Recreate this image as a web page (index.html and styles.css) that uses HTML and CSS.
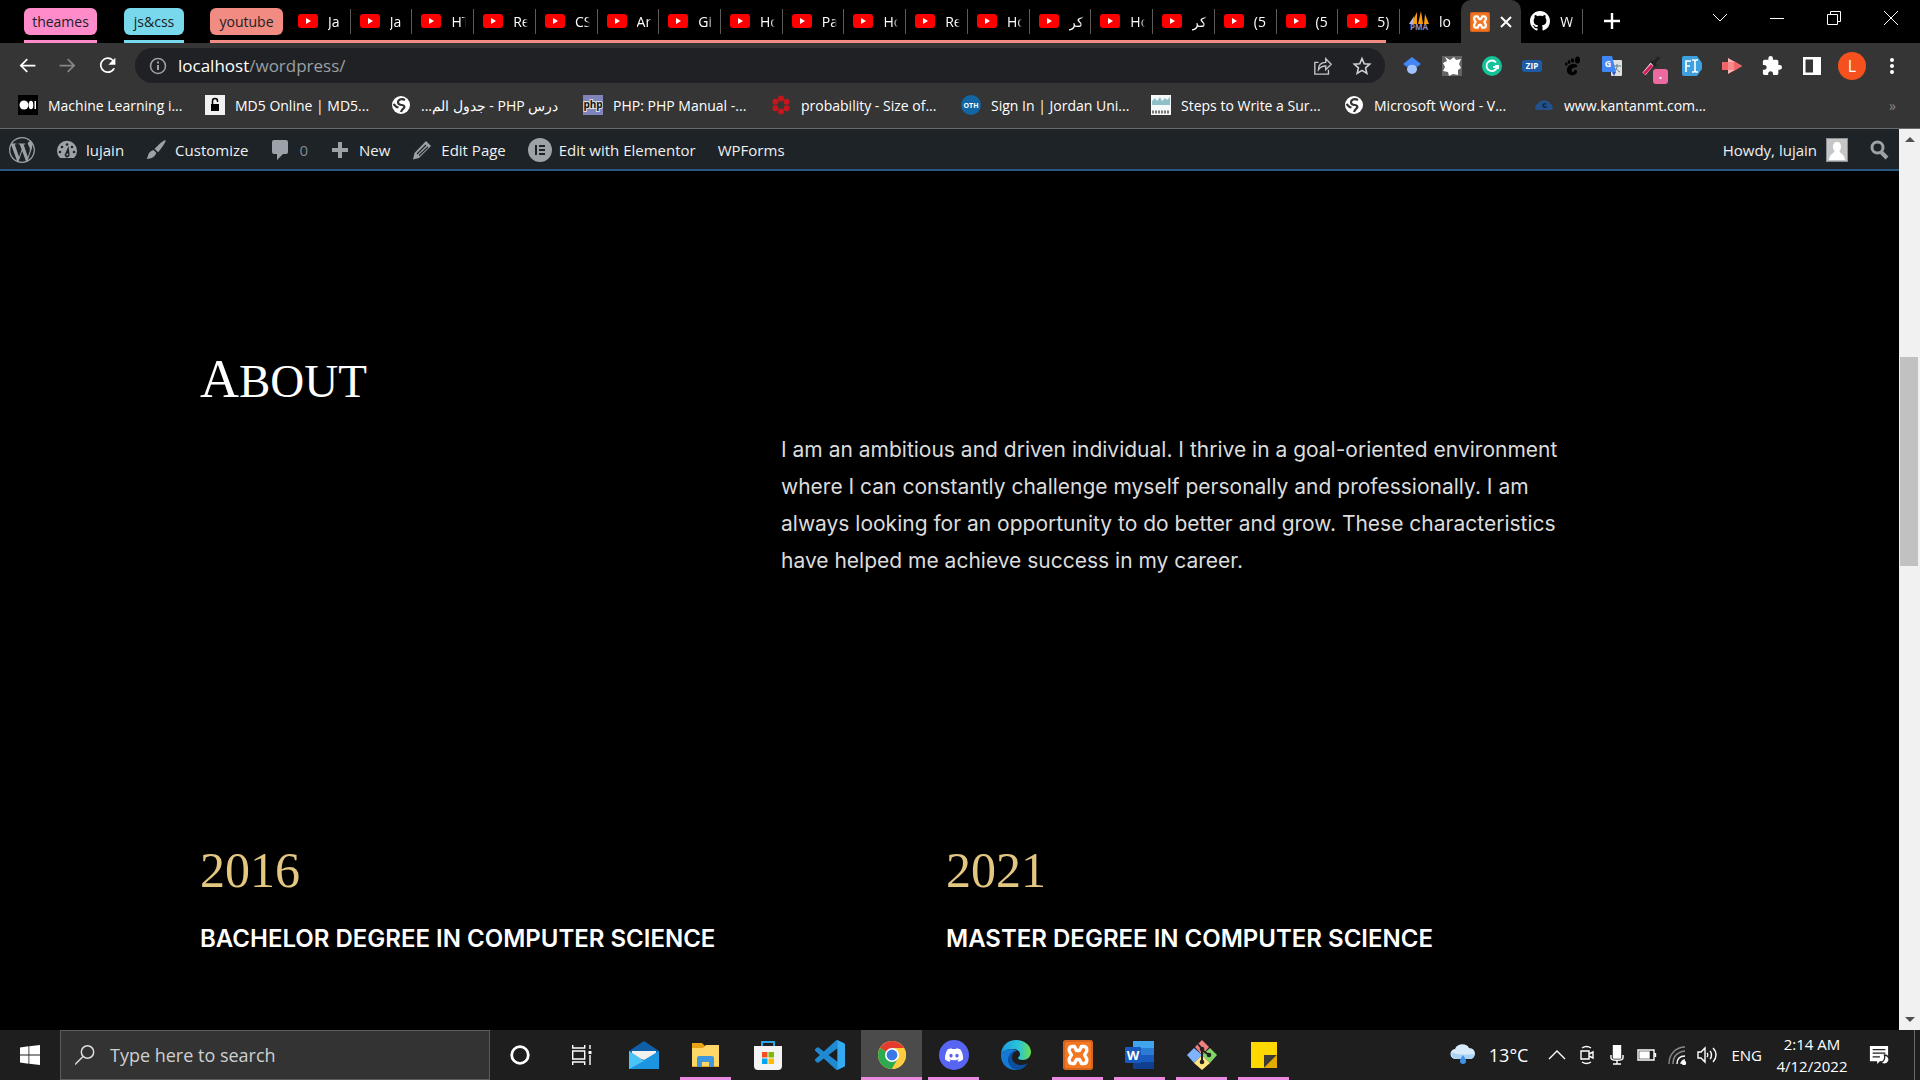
FILE: index.html
```html
<!DOCTYPE html>
<html lang="en">
<head>
<meta charset="utf-8">
<title>About</title>
<link rel="stylesheet" href="styles.css">
</head>
<body>
<svg class="sprite" aria-hidden="true">
  <symbol id="yt" viewBox="0 0 20 20"><rect y="3" width="20" height="14" rx="3" fill="#f00"/><path d="M8 7l5 3-5 3z" fill="#fff"/></symbol>
  <symbol id="xampp" viewBox="0 0 30 30"><rect width="30" height="30" rx="3" fill="#f37623"/><rect x="1" y="1" width="28" height="28" rx="2" fill="none" stroke="#b9541a"/><path d="M9 6.500h2.500l2 4h3l2-4H21c3 0 3.500 4 2 6L21.500 15l1.500 2.500c1.500 2 1 6-2 6h-2.500l-2-4h-3l-2 4H9c-3 0-3.500-4-2-6L8.500 15 7 12.500c-1.500-2-1-6 2-6z" fill="none" stroke="#fff" stroke-width="3.400" stroke-linejoin="round"/></symbol>
  <symbol id="globe" viewBox="0 0 20 20"><circle cx="10" cy="10" r="9" fill="#fff"/><path d="M14 5c-4-2-7 0-7 2s2 3 4 3 3 2 2 3-2 1-3 4M2.500 9l3 3 2 .5" fill="none" stroke="#303134" stroke-width="2.200"/></symbol>
</svg>

<header class="browser">
  <div class="tabstrip">
    <div class="group pink"><div class="group-row"><button class="chip">theames</button></div></div>
    <div class="group cyan"><div class="group-row"><button class="chip">js&amp;css</button></div></div>
    <div class="group coral grow">
      <div class="group-row">
        <button class="chip">youtube</button>
        <div class="tabs">
          <button class="tab"><svg><use href="#yt"/></svg><span>Ja</span></button>
          <button class="tab"><svg><use href="#yt"/></svg><span>Ja</span></button>
          <button class="tab"><svg><use href="#yt"/></svg><span>HT</span></button>
          <button class="tab"><svg><use href="#yt"/></svg><span>Re</span></button>
          <button class="tab"><svg><use href="#yt"/></svg><span>CS</span></button>
          <button class="tab"><svg><use href="#yt"/></svg><span>Ar</span></button>
          <button class="tab"><svg><use href="#yt"/></svg><span>Gi</span></button>
          <button class="tab"><svg><use href="#yt"/></svg><span>Ho</span></button>
          <button class="tab"><svg><use href="#yt"/></svg><span>Pa</span></button>
          <button class="tab"><svg><use href="#yt"/></svg><span>Ho</span></button>
          <button class="tab"><svg><use href="#yt"/></svg><span>Re</span></button>
          <button class="tab"><svg><use href="#yt"/></svg><span>Ho</span></button>
          <button class="tab"><svg><use href="#yt"/></svg><span>كر</span></button>
          <button class="tab"><svg><use href="#yt"/></svg><span>Ho</span></button>
          <button class="tab"><svg><use href="#yt"/></svg><span>كر</span></button>
          <button class="tab"><svg><use href="#yt"/></svg><span>(5</span></button>
          <button class="tab"><svg><use href="#yt"/></svg><span>(5</span></button>
          <button class="tab"><svg><use href="#yt"/></svg><span>5)</span></button>
        </div>
      </div>
    </div>
    <div class="loose-tabs">
      <button class="tab plain"><svg viewBox="0 0 20 20"><path d="M2 13L8 1v12zM9 13L12 0l2 13zM15 13l1-10 4 10z" fill="#f89c0e"/><path d="M0 13L5 5l-1 8z" fill="#b8b8d0"/><text x="10" y="19" font-size="8" font-weight="700" text-anchor="middle" fill="#8a8fc4">PMA</text></svg><span>lo</span></button>
      <div class="tab active"><svg><use href="#xampp"/></svg><button class="tab-close" aria-label="Close tab"><svg viewBox="0 0 12 12"><path d="M1 1l10 10M11 1L1 11" stroke="#fff" stroke-width="2"/></svg></button></div>
      <button class="tab"><svg viewBox="0 0 16 16"><path fill="#fff" d="M8 0C3.58 0 0 3.58 0 8c0 3.54 2.29 6.53 5.47 7.59.4.07.55-.17.55-.38 0-.19-.01-.82-.01-1.49-2.01.37-2.53-.49-2.69-.94-.09-.23-.48-.94-.82-1.13-.28-.15-.68-.52-.01-.53.63-.01 1.08.58 1.23.82.72 1.21 1.87.87 2.33.66.07-.52.28-.87.51-1.07-1.78-.2-3.64-.89-3.64-3.95 0-.87.31-1.59.82-2.15-.08-.2-.36-1.02.08-2.12 0 0 .67-.21 2.2.82.64-.18 1.32-.27 2-.27s1.36.09 2 .27c1.53-1.04 2.2-.82 2.2-.82.44 1.1.16 1.92.08 2.12.51.56.82 1.27.82 2.15 0 3.07-1.87 3.75-3.65 3.95.29.25.54.73.54 1.48 0 1.07-.01 1.93-.01 2.2 0 .21.15.46.55.38A8.01 8.01 0 0 0 16 8c0-4.42-3.58-8-8-8z"/></svg><span>W</span></button>
    </div>
    <button class="new-tab" aria-label="New tab"><svg viewBox="0 0 16 16"><path d="M8 0v16M0 8h16" stroke="#fff" stroke-width="2.400"/></svg></button>
    <div class="window-controls">
      <button aria-label="Search tabs"><svg viewBox="0 0 16 16"><path d="M1 4l7 7 7-7"/></svg></button>
      <button aria-label="Minimize"><svg viewBox="0 0 16 16"><path d="M1 8.500h14"/></svg></button>
      <button aria-label="Restore"><svg viewBox="0 0 16 16"><path d="M1.500 4.500h10v10h-10zM4.500 4.500v-3h10v10h-3"/></svg></button>
      <button aria-label="Close"><svg viewBox="0 0 16 16"><path d="M1 1l14 14M15 1L1 15"/></svg></button>
    </div>
  </div>

  <div class="toolbar">
    <button aria-label="Back"><svg viewBox="0 0 24 24"><path fill="#fff" d="M21 11H6.800l5.600-5.600L11 4l-8 8 8 8 1.400-1.400L6.800 13H21z"/></svg></button>
    <button aria-label="Forward"><svg viewBox="0 0 24 24"><path fill="#868686" d="M3 11h14.200l-5.600-5.600L13 4l8 8-8 8-1.400-1.400 5.600-5.600H3z"/></svg></button>
    <button aria-label="Reload"><svg viewBox="0 0 24 24"><path fill="#fff" d="M18.700 5.300A9 9 0 1 0 20.700 15h-2.300A7 7 0 1 1 17.300 6.700L13 11h8V3z"/></svg></button>
    <div class="omnibox">
      <svg viewBox="0 0 20 20"><circle cx="10" cy="10" r="7.500" fill="none" stroke="#9aa0a6" stroke-width="1.600"/><path d="M10 9v5M10 5.500v2" stroke="#9aa0a6" stroke-width="2"/></svg>
      <a href="#" class="url">localhost<span>/wordpress/</span></a>
      <button aria-label="Share"><svg viewBox="0 0 22 22" fill="none" stroke="#c4c6ca" stroke-width="1.500"><path d="M6 7H2v13h15v-5M6 15c0-6 4-8 8-8V3l6 6-6 6v-4c-4 0-6 1-8 4z"/></svg></button>
      <button aria-label="Bookmark this page"><svg viewBox="0 0 24 24"><path d="M12 3l2.600 6.200 6.700.6-5 4.400 1.500 6.600-5.800-3.500-5.800 3.500 1.500-6.600-5-4.400 6.700-.6z" fill="none" stroke="#d0d2d6" stroke-width="1.900"/></svg></button>
    </div>
    <div class="extensions">
      <button aria-label="Scholar"><svg viewBox="0 0 20 20"><circle cx="10" cy="13" r="5" fill="#a0c3ff"/><path d="M10 1l9 7-4 3c-2-3-8-3-10 0L1 8z" fill="#4285f4"/></svg></button>
      <button aria-label="Aperture"><svg viewBox="0 0 20 20"><rect width="20" height="20" fill="#646464"/><path d="M3 1l5 3 4-3 2 3 5-1-2 5 2 4-3 2v5l-5-1-4 2-1-4-5-1 2-4-2-4 4-2z" fill="#fff"/></svg></button>
      <button aria-label="Grammarly"><svg viewBox="0 0 20 20"><circle cx="10" cy="10" r="10" fill="#15c39a"/><path d="M14 6.500A5.300 5.300 0 1 0 15 11h-4M13 10h3v3" fill="none" stroke="#fff" stroke-width="1.800"/></svg></button>
      <button aria-label="Zip"><svg viewBox="0 0 20 20"><rect y="4" width="20" height="12" rx="3" fill="#1f5ca8"/><text x="10" y="13" font-size="8" font-weight="700" text-anchor="middle" fill="#fff">ZIP</text></svg></button>
      <button aria-label="Gnome"><svg viewBox="0 0 20 20" fill="#000"><path d="M15 9c-3-2-9-1-10 4s4 7 7 6 4-4 2-5-1 2-3 2-2-3 0-4 5 0 4-3z"/><ellipse cx="15.500" cy="4" rx="2.500" ry="3.500"/><ellipse cx="10.500" cy="4.500" rx="1.600" ry="2.300"/><ellipse cx="7" cy="6" rx="1.300" ry="2"/><ellipse cx="4.300" cy="8" rx="1.200" ry="1.700"/></svg></button>
      <button aria-label="Translate"><svg viewBox="0 0 20 20"><rect x="9" y="4" width="11" height="16" rx="1" fill="#e0e0e0"/><path d="M12 10h7M15 8v2c0 2-1 4-3 5M14 12c1 2 2 3 4 4" stroke="#607d8b" fill="none"/><path d="M1 0h9l4 16H1a1 1 0 0 1-1-1V1a1 1 0 0 1 1-1z" fill="#4285f4"/><path d="M10 16h4l-2 4z" fill="#2a56c6"/><text x="6" y="11" font-size="9" font-weight="700" text-anchor="middle" fill="#fff">G</text></svg></button>
      <button aria-label="Color picker"><svg viewBox="0 0 20 20"><path d="M2 18L11 7" stroke="#eee" stroke-width="4"/><path d="M2 18l8-9" stroke="#d81b60" stroke-width="3"/><path d="M9 5l5 5M12 7l5-6" stroke="#222" stroke-width="3"/></svg><span class="badge">.</span></button>
      <button aria-label="Font finder"><svg viewBox="0 0 20 20"><path d="M2 0h13l5 7v6l-5 7H2a2 2 0 0 1-2-2V2a2 2 0 0 1 2-2z" fill="#3fa0e0"/><path d="M4 16V5h5M4 10h4M10 4h2l1 1 1-1h2M10 16h2l1-1 1 1h2M13 5v10" fill="none" stroke="#fff" stroke-width="1.600"/></svg></button>
      <button aria-label="Recorder"><svg viewBox="0 0 20 20"><path d="M6 2l14 8-14 8z" fill="#ffb3b3"/><path d="M0 6h12v8H0z" fill="#f06466"/><path d="M12 5l8 5-8 5z" fill="#f06466"/><path d="M6 6h6v8H6z" fill="#f58a8b"/></svg></button>
      <button aria-label="Extensions"><svg viewBox="1 1 22 22"><path fill="#fff" d="M20.500 11H19V7c0-1.100-.9-2-2-2h-4V3.500a2.500 2.500 0 0 0-5 0V5H4c-1.100 0-2 .9-2 2v3.800h1.500c1.500 0 2.700 1.200 2.700 2.700s-1.200 2.700-2.700 2.700H2V20c0 1.100.9 2 2 2h3.800v-1.500c0-1.500 1.200-2.700 2.700-2.700s2.700 1.200 2.700 2.700V22H17c1.100 0 2-.9 2-2v-4h1.500a2.500 2.500 0 0 0 0-5z"/></svg></button>
      <button aria-label="Side panel"><svg viewBox="0 0 20 20"><path fill="#fff" fill-rule="evenodd" d="M1 1h18v18H1zM3.500 3.500v13H11v-13z"/></svg></button>
      <button class="profile" aria-label="Profile">L</button>
      <button class="menu" aria-label="Menu"><svg viewBox="0 0 20 20" fill="#fff"><circle cx="10" cy="4" r="2"/><circle cx="10" cy="10" r="2"/><circle cx="10" cy="16" r="2"/></svg></button>
    </div>
  </div>

  <nav class="bookmarks">
    <a href="#"><svg viewBox="0 0 20 20"><rect width="20" height="20" fill="#000"/><circle cx="6" cy="10" r="4.500" fill="#fff"/><ellipse cx="13" cy="10" rx="2.300" ry="4.300" fill="#fff"/><rect x="16.500" y="6" width="1.500" height="8" fill="#fff"/></svg><span>Machine Learning i...</span></a>
    <a href="#"><svg viewBox="0 0 20 20"><rect width="20" height="20" fill="#f1f1f1"/><rect x="6" y="9" width="8" height="7" fill="#000"/><path d="M7.500 9V6a2.500 2.500 0 0 1 5 0v1" fill="none" stroke="#000" stroke-width="1.500"/></svg><span>MD5 Online | MD5...</span></a>
    <a href="#"><svg><use href="#globe"/></svg><span dir="rtl">درس PHP - جدول الم...</span></a>
    <a href="#"><svg viewBox="0 0 20 20"><rect width="20" height="20" fill="#8184ba"/><text x="10" y="13" font-size="10" font-weight="700" text-anchor="middle" fill="#111" stroke="#ddd" stroke-width="2" paint-order="stroke">php</text></svg><span>PHP: PHP Manual -...</span></a>
    <a href="#"><svg viewBox="0 0 20 20" fill="#c4161c"><circle cx="10" cy="3.500" r="3"/><circle cx="10" cy="16.500" r="3"/><circle cx="4.400" cy="6.700" r="3"/><circle cx="15.600" cy="6.700" r="3"/><circle cx="4.400" cy="13.300" r="3"/><circle cx="15.600" cy="13.300" r="3"/></svg><span>probability - Size of...</span></a>
    <a href="#"><svg viewBox="0 0 20 20"><circle cx="10" cy="10" r="10" fill="#1266a4"/><text x="10" y="13" font-size="7" font-weight="700" text-anchor="middle" fill="#fff">OTH</text></svg><span>Sign In | Jordan Uni...</span></a>
    <a href="#"><svg viewBox="0 0 20 20"><rect width="20" height="20" fill="#f4f8f8"/><path d="M1 6l3-3 2 3 3-4 2 4 3-3 2 2 3-3v8H1z" fill="#8fc0c8"/><path d="M1 17h18" stroke="#777" stroke-width="3" stroke-dasharray="2 1"/></svg><span>Steps to Write a Sur...</span></a>
    <a href="#"><svg><use href="#globe"/></svg><span>Microsoft Word - V...</span></a>
    <a href="#"><svg viewBox="0 0 20 20"><path d="M3 15c-3-1-2-6 1-6 1-5 11-5 12 0 3 0 4 5 1 6z" fill="#24518c"/><path d="M12 9c-4-1-4 4 0 3v-1" fill="none" stroke="#14294a" stroke-width="1.600"/></svg><span>www.kantanmt.com...</span></a>
    <button class="more" aria-label="More bookmarks">»</button>
  </nav>
</header>

<div class="viewport">
  <div class="page">
    <nav class="adminbar">
      <a href="#" aria-label="WordPress"><svg class="wp" viewBox="0 0 24 24"><path d="M21.469 6.825c.84 1.537 1.318 3.300 1.318 5.175 0 3.979-2.156 7.456-5.363 9.325l3.295-9.527c.615-1.540.820-2.771.820-3.864 0-.405-.026-.780-.070-1.110m-7.981.105c.647-.030 1.232-.105 1.232-.105.582-.075.514-.930-.067-.899 0 0-1.755.135-2.880.135-1.064 0-2.850-.150-2.850-.150-.585-.030-.661.855-.075.885 0 0 .540.061 1.125.090l1.680 4.605-2.370 7.080L5.354 6.900c.649-.030 1.234-.100 1.234-.100.585-.075.516-.930-.065-.896 0 0-1.746.138-2.874.138-.200 0-.438-.008-.690-.015C4.911 3.150 8.235 1.215 12 1.215c2.809 0 5.365 1.072 7.286 2.833-.046-.003-.091-.009-.141-.009-1.060 0-1.812.923-1.812 1.914 0 .890.513 1.643 1.060 2.531.411.720.890 1.643.890 2.977 0 .915-.354 1.994-.821 3.479l-1.075 3.585-3.900-11.610zM12 22.784c-1.059 0-2.081-.153-3.048-.437l3.237-9.406 3.315 9.087c.024.053.050.101.078.149-1.120.393-2.325.609-3.582.609M1.211 12c0-1.564.336-3.050.935-4.390L7.290 21.709C3.694 19.960 1.212 16.271 1.211 12M12 0C5.385 0 0 5.385 0 12s5.385 12 12 12 12-5.385 12-12S18.615 0 12 0"/></svg></a>
      <a href="#"><svg viewBox="0 0 20 20"><path d="M3 18a10 10 0 1 1 14 0z"/><g fill="#1d2327"><circle cx="3" cy="12" r="1.300"/><circle cx="5" cy="7" r="1.300"/><circle cx="10" cy="4.500" r="1.300"/><circle cx="15" cy="7" r="1.300"/><circle cx="17" cy="12" r="1.300"/><path d="M11.500 6l1 8a2.500 2.500 0 1 1-4-1z"/></g><circle cx="10.300" cy="14.500" r="1" /></svg>lujain</a>
      <a href="#"><svg viewBox="0 0 20 20"><path d="M19.500.3c1 1-5 9-7.500 12l-3.500-3.500C11.500 6 18-1 19.500.3zM7.500 10l2.800 2.800C9 17 5 19.500.5 18.500c2-1.500 1-3.500 2.500-5.500 1.300-1.700 3-2.500 4.500-3z"/></svg>Customize</a>
      <a href="#"><svg viewBox="0 0 20 20"><path d="M4 0h12a2 2 0 0 1 2 2v10a2 2 0 0 1-2 2h-3l-6 6v-6H4a2 2 0 0 1-2-2V2a2 2 0 0 1 2-2z"/></svg><span class="count">0</span></a>
      <a href="#"><svg viewBox="0 0 20 20"><path d="M8 2h4v6h6v4h-6v6H8v-6H2V8h6z"/></svg>New</a>
      <a href="#"><svg viewBox="0 0 20 20"><path d="M14 1l5 5L7 18l-6 1.500L2.500 13z"/><path d="M5 14L14 5M7 15.500L16 7" stroke="#1d2327" stroke-width="1.200"/></svg>Edit Page</a>
      <a href="#" class="elementor"><svg class="round" viewBox="0 0 24 24"><circle cx="12" cy="12" r="12"/><path d="M8 7v10M11 8h6M11 12h6M11 16h6" stroke="#1d2327" stroke-width="2"/></svg>Edit with Elementor</a>
      <a href="#">WPForms</a>
      <a href="#" class="account">Howdy, lujain<svg class="avatar" viewBox="0 0 22 24"><rect width="22" height="24" fill="#8c8f94"/><rect x="1" y="1" width="20" height="22" fill="#c6c6c6"/><path d="M11 4c3 0 4 2 4 5 0 2-1 3-1.500 4 0 2 5 3 5.500 9H3c.5-6 5.500-7 5.500-9C8 12 7 11 7 9c0-3 1-5 4-5z" fill="#fff"/></svg></a>
      <button class="search-toggle" aria-label="Search"><svg viewBox="0 0 20 20"><circle cx="7.500" cy="7.500" r="5.500" fill="none" stroke="#9ca2a7" stroke-width="3"/><path d="M11 12l6 6" stroke="#9ca2a7" stroke-width="4"/></svg></button>
    </nav>

    <main class="content">
      <section class="about">
        <h2>About</h2>
        <p>I am an ambitious and driven individual. I thrive in a goal-oriented environment where I can constantly challenge myself personally and professionally. I am always looking for an opportunity to do better and grow. These characteristics have helped me achieve success in my career.</p>
      </section>
      <section class="degrees">
        <article><h3>2016</h3><h4>BACHELOR DEGREE IN COMPUTER SCIENCE</h4></article>
        <article><h3>2021</h3><h4>MASTER DEGREE IN COMPUTER SCIENCE</h4></article>
      </section>
    </main>
  </div>
  <div class="scrollbar" aria-hidden="true">
    <svg viewBox="0 0 21 20"><path d="M6 13l5-5 5 5z"/></svg>
    <div class="track"><div class="thumb"></div></div>
    <svg viewBox="0 0 21 20"><path d="M6 7l5 5 5-5z"/></svg>
  </div>
</div>

<footer class="taskbar">
  <button class="start" aria-label="Start"><svg viewBox="0 0 20 20" fill="#fff"><path d="M0 2.500l8.500-1.200v8.200H0zM9.300 1.200L20 0v9.500H9.300zM0 10.500h8.500v8.200L0 17.500zM9.300 10.500H20V20L9.300 18.800z"/></svg></button>
  <label class="task-search"><svg viewBox="0 0 20 20" fill="none" stroke="#ddd" stroke-width="1.500"><circle cx="12.500" cy="7" r="6.200"/><path d="M8 11.500L0 19.500"/></svg><input type="text" placeholder="Type here to search" aria-label="Type here to search"></label>
  <div class="apps">
    <button aria-label="Cortana"><svg class="small" viewBox="0 0 20 20"><circle cx="10" cy="10" r="8.300" fill="none" stroke="#fff" stroke-width="2.800"/></svg></button>
    <button aria-label="Task view"><svg class="small" viewBox="1 0 20 20" fill="none" stroke="#fff" stroke-width="1.400"><path d="M1.700 0v3h12V0M1.700 20v-3h12v3M1.700 6h12v8h-12zM19 0v4M19 10v10"/><path d="M17.500 7.500h3" stroke-width="3"/></svg></button>
    <button aria-label="Mail"><svg viewBox="0 0 30 30"><path d="M0 11L15 1l15 10v6H0z" fill="#0f5ea8"/><path d="M3 11h24v8L15 20 3 16z" fill="#f0f0f0"/><path d="M0 11l15 10L30 11v18H0z" fill="#35b5ee"/><path d="M0 29L30 11v18z" fill="#1c95e0"/><path d="M0 11l15 10L0 29z" fill="#4bc3f5"/></svg></button>
    <button aria-label="File Explorer" class="open"><svg viewBox="0 0 30 30"><path d="M1 3h10l3 3h14v21H1z" fill="#e8a317"/><path d="M1 8h11l3-3h13v21H1z" fill="#ffd769"/><path d="M6 27v-9a2 2 0 0 1 2-2h13a2 2 0 0 1 2 2v9h-5v-5h-7v5z" fill="#3f97dc"/></svg></button>
    <button aria-label="Store"><svg viewBox="0 0 30 30"><path d="M9 8V2h12v6" fill="none" stroke="#2aa5e8" stroke-width="2"/><path d="M1 6h28v20a4 4 0 0 1-4 4H5a4 4 0 0 1-4-4z" fill="#f3f3f3"/><path d="M9 12h5.500v5.500H9z" fill="#f25022"/><path d="M15.500 12H21v5.500h-5.500z" fill="#7fba00"/><path d="M9 18.500h5.500V24H9z" fill="#00a4ef"/><path d="M15.500 18.500H21V24h-5.500z" fill="#ffb900"/></svg></button>
    <button aria-label="Visual Studio Code"><svg viewBox="0 0 24 24"><path fill="#1f8ad2" d="M23.150 2.587L18.210.210a1.494 1.494 0 0 0-1.705.290l-9.460 8.630-4.120-3.128a.999.999 0 0 0-1.276.057L.327 7.261A1 1 0 0 0 .326 8.740L3.899 12 .326 15.260a1 1 0 0 0 .001 1.479L1.650 17.940a.999.999 0 0 0 1.276.057l4.120-3.128 9.460 8.630a1.492 1.492 0 0 0 1.704.290l4.942-2.377A1.500 1.500 0 0 0 24 20.060V3.939a1.500 1.500 0 0 0-.850-1.352zm-5.146 14.861L10.826 12l7.178-5.448v10.896z"/><path d="M18 .2l5.200 2.400A1.500 1.500 0 0 1 24 4v16a1.500 1.500 0 0 1-.8 1.400L18 23.800z" fill="#33aaf2"/></svg></button>
    <button aria-label="Chrome" class="open current"><svg viewBox="0 0 30 30"><circle cx="15" cy="15" r="14" fill="#ffcd40"/><path d="M15 15L2.900 8A14 14 0 0 1 27.100 8H15z" fill="#e33b2e"/><path d="M15 15L2.900 8A14 14 0 0 0 15 29l6-10.500z" fill="#2da94f"/><path d="M15 8.500h12.400A14 14 0 0 1 15 29l6-10.500z" fill="#ffcd40"/><circle cx="15" cy="15" r="7" fill="#fff"/><circle cx="15" cy="15" r="5.400" fill="#3b78e7"/></svg></button>
    <button aria-label="Discord" class="open"><svg viewBox="0 0 30 30"><circle cx="15" cy="15" r="15" fill="#5865f2"/><path transform="translate(6 6) scale(.75)" fill="#fff" d="M20.317 4.370a19.800 19.800 0 0 0-4.885-1.515l-.687 1.287c-1.845-.276-3.680-.276-5.487 0l-.696-1.287a19.700 19.700 0 0 0-4.886 1.515C.533 9.046-.319 13.580.099 18.058c2.084 1.564 4.072 2.479 6.024 3.085l1.310-2.022-1.914-.998.365-.419c4.004 1.783 8.256 1.783 12.138 0l.450.302-1.880 1.019 1.307 2.100c2.045-.579 4.034-1.494 6.087-3.002.531-5.232-.807-9.729-3.669-13.753zM8.020 15.331c-1.183 0-2.157-1.086-2.157-2.419s.956-2.419 2.157-2.419c1.211 0 2.176 1.095 2.157 2.419 0 1.333-.956 2.419-2.157 2.419zm7.975 0c-1.183 0-2.157-1.086-2.157-2.419s.955-2.419 2.157-2.419c1.211 0 2.176 1.095 2.157 2.419 0 1.333-.946 2.419-2.157 2.419z"/></svg></button>
    <button aria-label="Edge"><svg viewBox="0 0 30 30"><defs><linearGradient id="edge-top"><stop offset="0" stop-color="#1b9de2"/><stop offset=".6" stop-color="#2cc4d8"/><stop offset="1" stop-color="#6be04a"/></linearGradient></defs><path d="M0 14C1 5 7 0 15 0c9 0 15 6 15 12 0 5-4 8-8 8-3 0-5-1-5-2 0-1 2-1 2-4 0-3-3-5-7-5C6 9 2 11 0 14z" fill="url(#edge-top)"/><path d="M0 14c2-3 6-5 10-5 3 0 5 1 6 2-5 0-8 4-8 8 0 5 4 9 9 11C7 31-1 24 0 14z" fill="#1478d4"/><path d="M14 11c-2 2-3 4-3 6 0 5 4 8 9 8 3 0 5-1 7-2-3 4-6 7-11 7-5-1-9-5-9-10 0-4 3-8 7-9z" fill="#0c4f9e"/></svg></button>
    <button aria-label="XAMPP" class="open"><svg><use href="#xampp"/></svg></button>
    <button aria-label="Word" class="open"><svg viewBox="0 0 30 30"><path d="M8 1h21v8H8z" fill="#41a5ee"/><path d="M8 8h21v7H8z" fill="#2b7cd3"/><path d="M8 15h21v7H8z" fill="#185abd"/><path d="M8 22h21v7H8z" fill="#103f91"/><rect y="7" width="16" height="16" rx="1" fill="#185abd"/><text x="8" y="20" font-size="13" font-weight="700" text-anchor="middle" fill="#fff">W</text></svg></button>
    <button aria-label="Git" class="open"><svg viewBox="0 0 30 30"><path d="M15 0l7 7-7 8-7-8z" fill="#f08080"/><path d="M7 8l8 7-8 8-7-8z" fill="#80b3ff"/><path d="M23 8l7 7-7 8-8-8z" fill="#80d468"/><path d="M15 15l8 8-8 7-8-7z" fill="#ffe680"/><path d="M11 4l4 5v14M15 10l7 5" fill="none" stroke="#222" stroke-width="2"/><circle cx="15" cy="9" r="2.300" fill="#222"/><circle cx="22" cy="15" r="2.300" fill="#222"/><circle cx="15" cy="22" r="2.300" fill="#222"/></svg></button>
    <button aria-label="Sticky Notes" class="open"><svg viewBox="0 0 30 30"><path d="M2 2h26v26H2z" fill="#ffd800"/><path d="M15 28V15h13z" fill="#3e3a36"/><path d="M15 28h13V15z" fill="#e2a900"/></svg></button>
  </div>
  <div class="tray">
    <button class="weather"><svg viewBox="0 0 26 22"><path d="M6 15a5 5 0 0 1-1-10c2-6 12-6 14-1 7 0 8 9 2 11z" fill="#d7ebfa"/><path d="M6 15a5 5 0 0 1-4-7c4 3 15 3 22 2 1 3-1 5-4 5z" fill="#a9d4f5"/><path d="M13 11c2 3 3 5 3 6a3 3 0 0 1-6 0c0-1 1-3 3-6z" fill="#3f93ea"/></svg>13°C</button>
    <button aria-label="Hidden icons"><svg viewBox="0 0 20 20"><path d="M2 14l8-8 8 8"/></svg></button>
    <button aria-label="Meet now"><svg viewBox="0 0 20 20"><path d="M4 6h8v8H4zM12 9l4-2v6l-4-2M5 3c3-2 6-2 9 0M5 17c3 2 6 2 9 0"/></svg></button>
    <button aria-label="Microphone"><svg viewBox="0 0 20 20"><rect x="6.500" y="0" width="7" height="13" fill="#fff"/><path d="M4 10v3c0 3 12 3 12 0v-3M10 15v4M6 19h8"/></svg></button>
    <button aria-label="Battery"><svg viewBox="0 0 20 20"><path d="M1 5h16v10H1zM18.500 8v4"/><rect x="3" y="7" width="9" height="6" fill="#fff"/></svg></button>
    <button aria-label="Network"><svg viewBox="0 0 20 20"><path d="M6 19C6 12 10 7 18 6M2 19C2 9 9 2 18 2" stroke="#8a8a8a"/><path d="M10 19c0-5 3-8 8-8M14 19c0-2 2-4 4-4"/><circle cx="17" cy="18" r="1.500" fill="#fff"/></svg></button>
    <button aria-label="Volume"><svg viewBox="0 0 20 20"><path d="M1 7h3l4-4v14l-4-4H1zM10 8c1 1 1 3 0 4M13 6c2 2 2 6 0 8M16 3c4 4 4 10 0 14"/></svg></button>
    <button class="lang">ENG</button>
    <button class="clock"><span>2:14 AM</span><span>4/12/2022</span></button>
    <button aria-label="Notifications" class="notes"><svg viewBox="0 0 22 22"><path d="M1 1h20v17h-9l-3 3v-3H1z" fill="#fff" stroke="none"/><path d="M4 5h14M4 9h14M4 13h8" stroke="#1f1f1f"/><path d="M17 11a5 5 0 1 1-4 8c3 0 5-4 4-8z" fill="#fff" stroke="#1f1f1f"/></svg></button>
    <button class="show-desktop" aria-label="Show desktop"></button>
  </div>
</footer>
</body>
</html>
```
FILE: styles.css
```css
* {
  box-sizing: border-box;
}

body {
  margin: 0;
  min-height: 100vh;
  display: flex;
  flex-direction: column;
  background: #000;
  color: #fff;
  font-family: "Open Sans", "Noto Sans", sans-serif;
  font-size: 15px;
}

button {
  font: inherit;
  color: inherit;
  background: none;
  border: 0;
  padding: 0;
  display: flex;
  align-items: center;
  justify-content: center;
}

a {
  color: inherit;
  text-decoration: none;
}

svg {
  display: block;
  flex: none;
  width: 20px;
  height: 20px;
}

.sprite {
  position: absolute;
  width: 0;
  height: 0;
}

/* Tab strip */
.tabstrip {
  display: flex;
  height: 43px;
  padding: 0 1px 0 24px;
  font-size: 14px;
}

.group {
  border-bottom: 3px solid;
  height: 43px;
  margin-right: 27px;
}

.pink { border-color: #ff8bcb; }
.cyan { border-color: #78d9ec; margin-right: 26px; }
.coral { border-color: #f28b82; margin-right: 14px; }

.grow {
  flex: 1;
  min-width: 0;
}

.group-row {
  display: flex;
  align-items: center;
  height: 42px;
}

.chip {
  height: 27px;
  padding: 0 8px;
  border-radius: 6px;
  color: #202124;
  white-space: nowrap;
}

.pink .chip { background: #ff8bcb; width: 73px; }
.cyan .chip { background: #78d9ec; width: 60px; }
.coral .chip { background: #f28b82; width: 73px; }

.tabs {
  flex: 1;
  min-width: 0;
  display: flex;
  margin: 0 -14px 0 6px;
}

.tab {
  flex: 1;
  min-width: 0;
  height: 25px;
  padding-left: 9px;
  gap: 10px;
  justify-content: flex-start;
  border-right: 1px solid #5a5a5a;
}

/* Titles fade out at the end of the narrow tab */
.tab span {
  width: 20px;
  white-space: nowrap;
  text-align: left;
  mask-image: linear-gradient(90deg, #000 11px, transparent 15px);
}

.loose-tabs {
  display: flex;
  align-items: center;
  width: 183px;
  height: 42px;
}

.tab.plain {
  border-right: 0;
}

.tab.active {
  display: flex;
  align-items: center;
  align-self: flex-start;
  height: 43px;
  border-right: 0;
  border-radius: 10px 10px 0 0;
  background: #353535;
}

.tab-close svg {
  width: 12px;
  height: 12px;
}

.new-tab {
  width: 57px;
  height: 42px;
}

.new-tab svg {
  width: 16px;
  height: 16px;
}

.window-controls {
  display: flex;
  height: 36px;
  margin-left: 51px;
}

.window-controls button {
  width: 57px;
}

.window-controls svg {
  width: 16px;
  height: 16px;
  fill: none;
  stroke: #fff;
}

/* Toolbar */
.toolbar {
  display: flex;
  align-items: center;
  height: 45px;
  padding: 0 18px 0 17px;
  background: #353535;
}

.toolbar > button {
  width: 40px;
  padding-right: 20px;
}

.toolbar > button svg {
  width: 21px;
  height: 21px;
}

.omnibox {
  flex: 1;
  display: flex;
  align-items: center;
  gap: 19px;
  height: 35px;
  margin: 0 17px 0 -2px;
  padding: 0 13px;
  border-radius: 18px;
  background: #202124;
}

.url {
  flex: 1;
  margin-left: -9px;
  font-size: 17px;
}

.url span {
  color: #9aa0a6;
}

.extensions {
  display: flex;
  align-items: center;
  gap: 20px;
}

.extensions button {
  position: relative;
  width: 20px;
  height: 28px;
}

.extensions .profile {
  width: 28px;
  margin: 0 -4px;
  border-radius: 50%;
  background: #f4511e;
  font-size: 16px;
}

.badge {
  position: absolute;
  left: 11px;
  top: 17px;
  width: 15px;
  height: 15px;
  border-radius: 3px;
  background: #ec6a9f;
  font-size: 12px;
  font-weight: 700;
  line-height: 12px;
}

/* Bookmarks bar */
.bookmarks {
  display: grid;
  grid-template-columns: 187px 186px 192px 188px 190px 190px 193px 190px 1fr auto;
  align-items: center;
  height: 41px;
  padding: 0 24px 6px 18px;
  background: #353535;
  border-bottom: 1px solid #6a6a6a;
  font-size: 14px;
}

.bookmarks a {
  display: flex;
  align-items: center;
  gap: 10px;
  white-space: nowrap;
}

.more {
  color: #868686;
}

/* Page */
.viewport {
  flex: 1;
  display: flex;
}

.page {
  flex: 1;
}

.adminbar {
  display: flex;
  align-items: center;
  gap: 22px;
  height: 42px;
  padding: 2px 9px 0;
  background: #1d2327;
  border-bottom: 2px solid #28587f;
  color: #f0f0f1;
  font-size: 15px;
}

.adminbar a {
  display: flex;
  align-items: center;
  gap: 9px;
  white-space: nowrap;
}

.adminbar svg {
  fill: #9ca2a7;
}

.adminbar .wp {
  width: 26px;
  height: 26px;
}

.adminbar .round {
  width: 24px;
  height: 24px;
}

.adminbar .elementor {
  gap: 7px;
}

.count {
  color: #84888c;
}

.adminbar .account {
  margin-left: auto;
}

.adminbar .avatar {
  width: 22px;
  height: 24px;
}

.content {
  padding: 173px 318px 0 200px;
}

.about {
  display: grid;
  grid-template-columns: 581px 1fr;
}

.about h2 {
  grid-column: 1 / -1;
  margin: 0;
  font: 400 47px/70px "Liberation Serif", serif;
  text-transform: uppercase;
}

.about h2::first-letter {
  font-size: 54px;
}

.about p {
  grid-column: 2;
  margin: 15px 0 0;
  font: 400 21px/37px Inter, sans-serif;
  color: #dcdcdc;
}

.degrees {
  display: grid;
  grid-template-columns: 746px 1fr;
  padding-top: 256px;
}

.degrees h3 {
  margin: 0;
  font: 400 50px/70px "Liberation Serif", serif;
  color: #e2c681;
}

.degrees h4 {
  margin: 17px 0 0;
  font: 600 24px/34px Inter, sans-serif;
  white-space: nowrap;
}

/* Scrollbar */
.scrollbar {
  display: flex;
  flex-direction: column;
  width: 21px;
  background: #f1f1f1;
}

.scrollbar svg {
  width: 21px;
  height: 20px;
  fill: #505050;
}

.track {
  flex: 1;
  padding: 208px 2px 0 1px;
}

.thumb {
  height: 209px;
  background: #c1c1c1;
}

/* Taskbar */
.taskbar {
  display: flex;
  height: 50px;
  background: #1e1e1e;
}

.start {
  width: 60px;
}

.task-search {
  display: flex;
  align-items: center;
  gap: 15px;
  width: 430px;
  padding: 0 14px;
  border: 1px solid #5c5c5c;
  background: #333;
}

.task-search input {
  flex: 1;
  border: 0;
  padding: 0;
  background: none;
  color: #fff;
  font: inherit;
  font-size: 18px;
}

.task-search input::placeholder {
  color: #cfcfcf;
}

.apps {
  display: flex;
  gap: 11px;
  padding-left: 4px;
}

.apps button {
  width: 51px;
  border-top: 3px solid transparent;
  border-bottom: 3px solid transparent;
}

.apps svg {
  width: 30px;
  height: 30px;
}

.apps .small {
  width: 20px;
  height: 20px;
}

.apps .open {
  border-bottom-color: #ea8ae0;
}

.apps .current {
  width: 61px;
  margin: 0 -5px;
  background: #4b4b4b;
  border-top-color: #4b4b4b;
}

.tray {
  display: flex;
  align-items: center;
  gap: 10px;
  margin-left: auto;
  padding-right: 5px;
}

.tray svg {
  fill: none;
  stroke: #fff;
  stroke-width: 1.4;
}

.tray .weather {
  gap: 13px;
  margin-right: 9px;
  font-size: 18px;
}

.weather svg {
  width: 26px;
  height: 22px;
  stroke: none;
}

.lang {
  margin-left: 4px;
}

.clock {
  flex-direction: column;
  width: 80px;
  line-height: 22px;
}

.notes {
  margin: 0 15px 0 7px;
}

.show-desktop {
  align-self: stretch;
  border-left: 1px solid #6a6a6a;
}
```
